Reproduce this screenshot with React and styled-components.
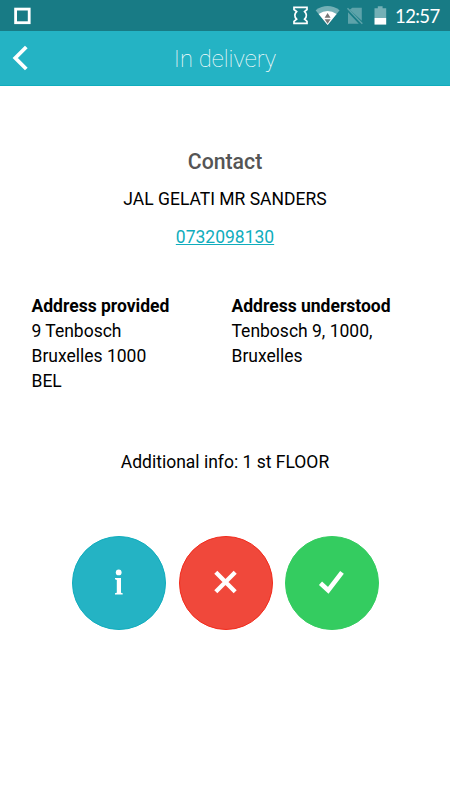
import React from "react";
import styled, { createGlobalStyle } from "styled-components";

const GlobalStyle = createGlobalStyle`
    * {
        box-sizing: border-box;
    }

    body {
        margin: 0;
        background: #fff;
    }
`;

const Screen = styled.div`
    display: flex;
    flex-direction: column;
    width: 450px;
    height: 800px;
    overflow: hidden;
    background: #fff;
    color: #000;
    font-family: Roboto, sans-serif;
    font-size: 17.5px;
    line-height: 25px;
`;

const StatusBar = styled.div`
    display: flex;
    align-items: center;
    justify-content: space-between;
    height: 31px;
    padding: 0 10px 0 14px;
    background: #187b85;

    svg {
        display: block;
    }
`;

const StatusIcons = styled.div`
    display: flex;
    align-items: center;
    height: 31px;
`;

const Clock = styled.span`
    width: 45px;
    margin-left: 8px;
    padding-top: 1px;
    color: #fff;
    font-family: Lato, sans-serif;
    font-size: 18.5px;
    letter-spacing: -0.6px;
    line-height: 30px;
    white-space: nowrap;
`;

const Header = styled.header`
    display: grid;
    grid-template-columns: 50px 1fr 50px;
    align-items: center;
    height: 55px;
    background: #24b3c4;
    border-bottom: 1px solid #10adbd;
`;

const BackButton = styled.button`
    display: flex;
    padding: 0 0 0 12px;
    border: 0;
    background: none;
`;

const Title = styled.h1`
    margin: 0;
    padding-top: 2px;
    color: #fff;
    font-size: 23.75px;
    font-weight: 100;
    line-height: 52px;
    text-align: center;
`;

const Content = styled.main`
    display: flex;
    flex-direction: column;
    align-items: center;
    padding-top: 63px;
`;

const ContactTitle = styled.h2`
    margin: 0 0 12px;
    color: #555;
    font-size: 21.25px;
    font-weight: 500;
    line-height: 26px;
`;

const Phone = styled.a`
    margin-top: 13px;
    color: #10adbd;
    text-decoration: underline;
`;

const Addresses = styled.div`
    display: grid;
    grid-template-columns: 200px 200px;
    width: 387px;
    margin-top: 44px;
`;

const AddressTitle = styled.div`
    font-weight: 700;
`;

const AdditionalInfo = styled.div`
    margin-top: 56px;
`;

const Actions = styled.div`
    display: flex;
    gap: 12.25px;
    margin: 61px 0 0 1px;
`;

const ActionButton = styled.button`
    display: flex;
    align-items: center;
    justify-content: center;
    width: 94px;
    height: 94px;
    padding: 0;
    border: 1px solid ${p => p.$border};
    border-radius: 50%;
    background: ${p => p.$color};
`;

const AppIcon = () => (
    <svg width="17" height="31" viewBox="0 0 17 31">
        <rect x="1.6" y="9.1" width="13.6" height="13.6" fill="none" stroke="#fff" strokeWidth="2.8" />
    </svg>
);

const SystemIcons = () => (
    <svg width="96" height="31" viewBox="291 0 96 31">
        <path
            d="M294 7.3H307V9.5L304.6 11.6Q308.2 15.3 304.6 19.2L307 21.3V23.3H294V21.3L296.6 19.2Q293 15.3 296.6 11.6L294 9.5Z"
            fill="none"
            stroke="#fff"
            strokeWidth="1.7"
        />
        <path d="M315.6 10.2Q327.6 1.8 339.6 10.2L327.6 25Z" fill="#74b0b6" />
        <path d="M318.6 13.9Q327.6 8 336.6 13.9L327.6 25Z" fill="#fff" />
        <path d="M324.6 17.7L327.6 13L330.6 17.7ZM324.6 19.2H330.6L327.6 23.8Z" fill="#777" />
        <path d="M352.3 7.7H361.8V20.8L349.7 9.8Z M348 12.2L358.8 23.8H348Z" fill="#5da3aa" />
        <path d="M347.5 8.3L362.3 23.8" stroke="#5da3aa" strokeWidth="1.5" />
        <path d="M374.5 8.3H377.8V6.3H382.6V8.3H386.2V18H374.5Z" fill="#74b0b6" />
        <path d="M374.5 18H386.2V24.6H374.5Z" fill="#fff" />
    </svg>
);

const BackIcon = () => (
    <svg width="18" height="28" viewBox="0 0 18 28">
        <path d="M14.3 3L3.3 14L14.3 25" fill="none" stroke="#fff" strokeWidth="3.8" />
    </svg>
);

const InfoIcon = () => (
    <svg width="30" height="30" viewBox="0 0 30 30">
        <circle cx="14.7" cy="4.4" r="2.9" fill="#fff" />
        <path d="M11 10.1H17V24.7L18.7 25.3V26.5H11V25.3L12.8 24.7V11.9L11 11.3Z" fill="#fff" />
    </svg>
);

const CrossIcon = () => (
    <svg width="30" height="30" viewBox="0 0 30 30">
        <path d="M4.8 4.3L24.2 23.7M24.2 4.3L4.8 23.7" stroke="#fff" strokeWidth="4.3" />
    </svg>
);

const CheckIcon = () => (
    <svg width="30" height="30" viewBox="0 0 30 30">
        <path d="M3.5 15.3L11.2 22.3L25 4.3" fill="none" stroke="#fff" strokeWidth="4.6" />
    </svg>
);

export default function App() {
    return (
        <Screen>
            <GlobalStyle />

            <StatusBar>
                <AppIcon />
                <StatusIcons>
                    <SystemIcons />
                    <Clock>12:57</Clock>
                </StatusIcons>
            </StatusBar>

            <Header>
                <BackButton aria-label="Back">
                    <BackIcon />
                </BackButton>
                <Title>In delivery</Title>
            </Header>

            <Content>
                <ContactTitle>Contact</ContactTitle>
                <div>JAL GELATI MR SANDERS</div>
                <Phone href="tel:0732098130">0732098130</Phone>

                <Addresses>
                    <div>
                        <AddressTitle>Address provided</AddressTitle>
                        <div>9 Tenbosch</div>
                        <div>Bruxelles 1000</div>
                        <div>BEL</div>
                    </div>
                    <div>
                        <AddressTitle>Address understood</AddressTitle>
                        <div>Tenbosch 9, 1000,</div>
                        <div>Bruxelles</div>
                    </div>
                </Addresses>

                <AdditionalInfo>Additional info: 1 st FLOOR</AdditionalInfo>

                <Actions>
                    <ActionButton $color="#24b3c4" $border="#10adbd" aria-label="Info">
                        <InfoIcon />
                    </ActionButton>
                    <ActionButton $color="#f0483b" $border="#f22b1c" aria-label="Refuse">
                        <CrossIcon />
                    </ActionButton>
                    <ActionButton $color="#34cc60" $border="#34cc60" aria-label="Confirm">
                        <CheckIcon />
                    </ActionButton>
                </Actions>
            </Content>
        </Screen>
    );
}
